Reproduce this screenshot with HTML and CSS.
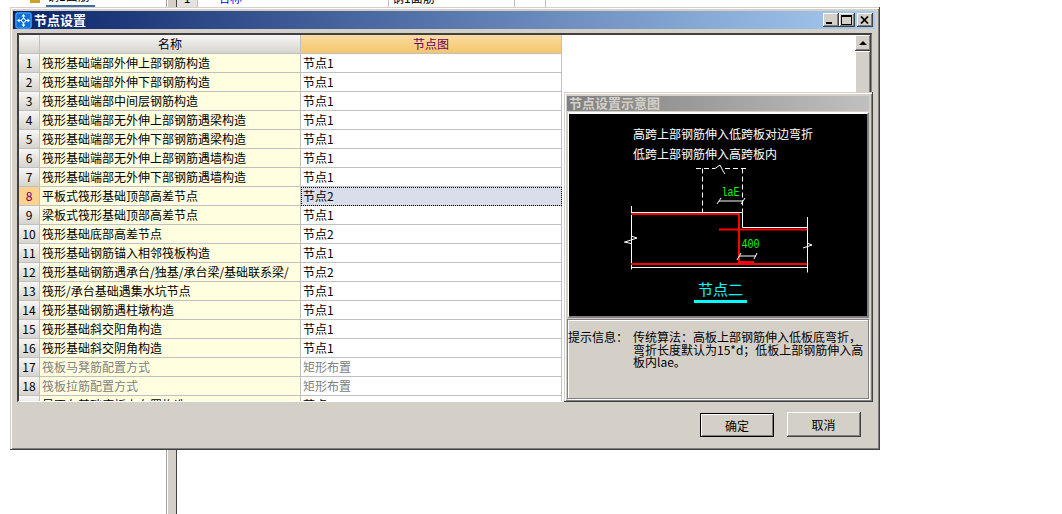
FILE: index.html
```html
<!DOCTYPE html>
<html lang="zh-CN">
<head>
    <meta charset="UTF-8">
    <title>节点设置</title>
    <link rel="stylesheet" href="styles.css">
</head>
<body>
    <!-- application behind the dialog -->
    <div class="back-tree">
        <span class="back-icon"></span>
        <span class="back-tree-label">钢1面筋</span>
    </div>
    <div class="back-splitter"></div>
    <div class="back-table">
        <div class="back-num">1</div>
        <div class="back-name">名称</div>
        <div class="back-value">钢1面筋</div>
        <div class="back-cell"></div>
    </div>

    <div class="window">
        <div class="titlebar">
            <svg class="title-icon" width="17" height="17" viewBox="0 0 17 17">
                <rect x="0" y="0" width="17" height="17" rx="3" fill="#0f6fd8"/>
                <rect x="1" y="1" width="15" height="15" rx="2" fill="none" stroke="#4fa6f2"/>
                <path d="M8.5 3V14M3 8.5H14" fill="none" stroke="#fff" stroke-width="1.2"/>
                <path d="M8.5 2L6.5 4.5H10.5ZM8.5 15L6.5 12.5H10.5ZM2 8.5L4.5 6.5V10.5ZM15 8.5L12.5 6.5V10.5Z" fill="#fff"/>
                <circle cx="8.5" cy="8.5" r="2" fill="#0f6fd8" stroke="#fff"/>
            </svg>
            <div class="title-text">节点设置</div>
            <div class="title-btns">
                <div class="cap-btn"><span class="cap-min"></span></div>
                <div class="cap-btn"><span class="cap-max"></span></div>
                <div class="cap-btn cap-close">
                    <svg width="9" height="8" viewBox="0 0 9 8"><path d="M1 0.5L8 7.5M8 0.5L1 7.5" stroke="#000" stroke-width="1.7" fill="none"/></svg>
                </div>
            </div>
        </div>

        <div class="grid-panel">
            <div class="grid">
                <div class="row row-head">
                    <div class="num"></div>
                    <div class="cell">名称</div>
                    <div class="cell cell-active">节点图</div>
                </div>
                <div class="row"><div class="num">1</div><div class="cell name">筏形基础端部外伸上部钢筋构造</div><div class="cell">节点1</div></div>
                <div class="row"><div class="num">2</div><div class="cell name">筏形基础端部外伸下部钢筋构造</div><div class="cell">节点1</div></div>
                <div class="row"><div class="num">3</div><div class="cell name">筏形基础端部中间层钢筋构造</div><div class="cell">节点1</div></div>
                <div class="row"><div class="num">4</div><div class="cell name">筏形基础端部无外伸上部钢筋遇梁构造</div><div class="cell">节点1</div></div>
                <div class="row"><div class="num">5</div><div class="cell name">筏形基础端部无外伸下部钢筋遇梁构造</div><div class="cell">节点1</div></div>
                <div class="row"><div class="num">6</div><div class="cell name">筏形基础端部无外伸上部钢筋遇墙构造</div><div class="cell">节点1</div></div>
                <div class="row"><div class="num">7</div><div class="cell name">筏形基础端部无外伸下部钢筋遇墙构造</div><div class="cell">节点1</div></div>
                <div class="row row-selected"><div class="num">8</div><div class="cell name">平板式筏形基础顶部高差节点</div><div class="cell cell-current">节点2</div></div>
                <div class="row"><div class="num">9</div><div class="cell name">梁板式筏形基础顶部高差节点</div><div class="cell">节点1</div></div>
                <div class="row"><div class="num">10</div><div class="cell name">筏形基础底部高差节点</div><div class="cell">节点2</div></div>
                <div class="row"><div class="num">11</div><div class="cell name">筏形基础钢筋锚入相邻筏板构造</div><div class="cell">节点1</div></div>
                <div class="row"><div class="num">12</div><div class="cell name">筏形基础钢筋遇承台/独基/承台梁/基础联系梁/</div><div class="cell">节点2</div></div>
                <div class="row"><div class="num">13</div><div class="cell name">筏形/承台基础遇集水坑节点</div><div class="cell">节点1</div></div>
                <div class="row"><div class="num">14</div><div class="cell name">筏形基础钢筋遇柱墩构造</div><div class="cell">节点1</div></div>
                <div class="row"><div class="num">15</div><div class="cell name">筏形基础斜交阳角构造</div><div class="cell">节点1</div></div>
                <div class="row"><div class="num">16</div><div class="cell name">筏形基础斜交阴角构造</div><div class="cell">节点1</div></div>
                <div class="row row-off"><div class="num">17</div><div class="cell name">筏板马凳筋配置方式</div><div class="cell">矩形布置</div></div>
                <div class="row row-off"><div class="num">18</div><div class="cell name">筏板拉筋配置方式</div><div class="cell">矩形布置</div></div>
                <div class="row"><div class="num">19</div><div class="cell name">是否在基础底板上布置构造</div><div class="cell">节点1</div></div>
            </div>
            <div class="scrollbar">
                <div class="scroll-up"><span class="arrow-up"></span></div>
                <div class="scroll-thumb"></div>
            </div>
        </div>

        <div class="footer">
            <button type="button" class="btn btn-default">确定</button>
            <button type="button" class="btn">取消</button>
        </div>

        <!-- floating preview panel -->
        <div class="preview">
            <div class="preview-title">节点设置示意图</div>
            <div class="preview-frame">
                <svg class="drawing" width="298" height="202" viewBox="4 4 298 202">
                    <text class="dw-text" x="68" y="28.5">高跨上部钢筋伸入低跨板对边弯折</text>
                    <text class="dw-text" x="68" y="48.5">低跨上部钢筋伸入高跨板内</text>

                    <path class="dw-dash" d="M131 58.5H150M160 58.5H182M137.5 58.5V102M177.5 58.5V102"/>
                    <path class="dw-line" d="M150 58.5L155 55L158 61L160 64"/>

                    <text class="dw-dim" x="156.5" y="86" textLength="18" lengthAdjust="spacingAndGlyphs">laE</text>
                    <path class="dw-line" d="M154 91H178M152 94L156 88M176 94L180 88"/>

                    <path class="dw-line" d="M66.5 102.5H177.5V117.5H242.5M66.5 96V159.5M242.5 107V162.5M66.5 157.5H242.5"/>
                    <path class="dw-line" d="M59 132L66 133.5M66 126L72 128L66 130L60 132M238 138L247 135L242 133"/>

                    <path class="dw-red" d="M66 104H174V154M154 119.5H242M66 154H242"/>
                    <rect x="174" y="151" width="15" height="3" fill="#ff0000"/>

                    <text class="dw-dim" x="176.5" y="138" textLength="18" lengthAdjust="spacingAndGlyphs">400</text>
                    <path class="dw-line" d="M174 146H191M172 150L176 143M189 149L192 143"/>

                    <text class="dw-name" x="133" y="185">节点二</text>
                    <rect x="129" y="190" width="53" height="3" fill="#00ffff"/>
                </svg>
            </div>
            <div class="preview-info">
                <div class="info-label">提示信息：</div>
                <div class="info-text">传统算法：高板上部钢筋伸入低板底弯折，<br>弯折长度默认为15*d；低板上部钢筋伸入高<br>板内lae。</div>
            </div>
        </div>
    </div>
</body>
</html>
```

FILE: styles.css
```css
* {
    margin: 0;
    padding: 0;
    box-sizing: border-box;
}

body {
    position: relative;
    width: 1062px;
    height: 514px;
    overflow: hidden;
    background: #fff;
    font-family: "Noto Sans CJK SC", "Liberation Sans", sans-serif;
    font-size: 12px;
    color: #000;
}

/* things behind the dialog */
.back-tree {
    position: absolute;
    left: 0;
    top: 0;
    width: 166px;
    height: 8px;
    overflow: hidden;
}

.back-icon {
    position: absolute;
    left: 30px;
    top: 0;
    width: 10px;
    height: 3px;
    background: #c9a227;
}

.back-tree-label {
    position: absolute;
    left: 46px;
    top: -12px;
    width: 49px;
    line-height: 16px;
    height: 19px;
    padding-left: 1px;
    white-space: nowrap;
    border-bottom: 2px solid #3a6ea5;
}

.back-splitter {
    position: absolute;
    left: 166px;
    top: 0;
    width: 11px;
    height: 514px;
    background: #d4d0c8;
    border-left: 1px solid #a5a29b;
    border-right: 1px solid #404040;
    box-shadow: inset 1px 0 0 #fff;
}

.back-table {
    position: absolute;
    left: 177px;
    top: 0;
    height: 8px;
    display: flex;
    overflow: hidden;
}

.back-table > div {
    line-height: 14px;
    margin-top: -9px;
    height: 17px;
    white-space: nowrap;
    border-right: 1px solid #c0c0c0;
}

.back-num {
    width: 21px;
    background: #e4e3df;
    text-align: center;
}

.back-name {
    width: 191px;
    padding-left: 20px;
    color: #0000ff;
}

.back-value {
    width: 126px;
    padding-left: 3px;
}

.back-cell {
    width: 31px;
}

/* dialog */
.window {
    position: absolute;
    left: 10px;
    top: 7px;
    width: 870px;
    height: 443px;
    padding: 4px 4px 0 3px;
    background: #d4d0c8;
    border-right: 1px solid #404040;
    border-bottom: 1px solid #404040;
    box-shadow: inset 1px 1px 0 #d4d0c8, inset 2px 2px 0 #fff, inset -1px -1px 0 #808080;
}

.titlebar {
    display: flex;
    align-items: center;
    height: 18px;
    padding-left: 2px;
    background: linear-gradient(90deg, #0a246a 0%, #a6caf0 100%);
}

.title-icon {
    flex: none;
}

.title-text {
    margin: -2px 0 0 2px;
    font-size: 13px;
    font-weight: 700;
    color: #fff;
}

.title-btns {
    display: flex;
    margin-left: auto;
    margin-right: 2px;
}

.cap-btn {
    position: relative;
    width: 16px;
    height: 14px;
    background: #d4d0c8;
    border-right: 1px solid #404040;
    border-bottom: 1px solid #404040;
    box-shadow: inset 1px 1px 0 #fff, inset -1px -1px 0 #808080;
    display: flex;
    align-items: center;
    justify-content: center;
}

.cap-close {
    margin-left: 2px;
}

.cap-min {
    width: 6px;
    height: 2px;
    margin-top: 7px;
    margin-right: 4px;
    background: #000;
}

.cap-max {
    width: 11px;
    height: 10px;
    border: 1px solid #000;
    border-top-width: 2px;
}

/* table */
.grid-panel {
    display: flex;
    width: 855px;
    height: 369px;
    margin: 4px 0 0 4px;
    background: #fff;
    border-top: 2px solid #404040;
    border-left: 2px solid #404040;
    border-right: 1px solid #808080;
    border-bottom: 1px solid #fff;
}

.grid {
    flex: 1;
    overflow: hidden;
}

.row {
    display: grid;
    grid-template-columns: 21px 261px 261px;
    width: 543px;
    height: 19px;
    line-height: 17px;
}

.num,
.cell {
    height: 19px;
    border-right: 1px solid #c0c0c0;
    border-bottom: 1px solid #c0c0c0;
    overflow: hidden;
    white-space: nowrap;
}

.num {
    text-align: center;
    background: linear-gradient(180deg, #f6f6f5 0%, #d6d4ce 100%);
}

.cell {
    padding-left: 2px;
    background: #fff;
}

.cell.name {
    background: #ffffe0;
}

.row-head .cell {
    padding-left: 0;
    text-align: center;
    background: linear-gradient(180deg, #f6f6f5 0%, #d6d4ce 100%);
}

.row-head .cell-active {
    color: #660066;
    background: linear-gradient(180deg, #fbdca2 0%, #f5c56b 100%);
}

.row-selected .num {
    color: #660066;
    background: #fdd28a;
}

.row-selected .cell-current {
    background: #d9deea;
    outline: 1px dotted #000;
    outline-offset: -1px;
}

.row-off .cell {
    color: #808080;
}

.scrollbar {
    flex: none;
    width: 16px;
    display: flex;
    flex-direction: column;
}

.scroll-up,
.scroll-thumb {
    background: #d4d0c8;
    border-right: 1px solid #404040;
    border-bottom: 1px solid #404040;
    box-shadow: inset 1px 1px 0 #fff, inset -1px -1px 0 #808080;
}

.scroll-up {
    height: 16px;
    display: flex;
    align-items: center;
    justify-content: center;
}

.arrow-up {
    width: 0;
    height: 0;
    border-left: 4px solid transparent;
    border-right: 4px solid transparent;
    border-bottom: 4px solid #000;
}

.scroll-thumb {
    flex: 1;
}

/* buttons */
.footer {
    display: flex;
    justify-content: flex-end;
    align-items: flex-start;
    gap: 13px;
    margin-top: 10px;
    padding-right: 14px;
}

.btn {
    width: 74px;
    height: 25px;
    font-family: inherit;
    font-size: 12px;
    color: #000;
    background: #d4d0c8;
    border: none;
    border-right: 1px solid #404040;
    border-bottom: 1px solid #404040;
    box-shadow: inset 1px 1px 0 #fff, inset -1px -1px 0 #808080;
}

.btn-default {
    height: 24px;
    margin-top: 1px;
    border: 1px solid #000;
    box-shadow: inset 1px 1px 0 #fff, inset -1px -1px 0 #808080;
}

/* preview panel */
.preview {
    position: absolute;
    left: 554px;
    top: 85px;
    width: 309px;
    height: 310px;
    padding: 4px 3px 0 3px;
    background: #d4d0c8;
    border-right: 1px solid #404040;
    border-bottom: 1px solid #404040;
    box-shadow: inset 1px 1px 0 #d4d0c8, inset 2px 2px 0 #fff, inset -1px -1px 0 #808080;
}

.preview-title {
    height: 15px;
    padding-left: 2px;
    font-size: 13px;
    line-height: 14px;
    font-weight: 700;
    color: #d4d0c8;
    background: linear-gradient(90deg, #808080 0%, #c0c0c0 100%);
}

.preview-frame {
    width: 301px;
    height: 206px;
    margin: 1px 0 0 1px;
    background: #000;
    border-top: 2px solid #fff;
    border-left: 1px solid #fff;
    border-right: 2px solid #808080;
    border-bottom: 2px solid #808080;
}

.drawing {
    display: block;
}

.dw-text {
    font-size: 12px;
    fill: #fff;
}

.dw-dim {
    font-family: "Liberation Mono", monospace;
    font-size: 12px;
    fill: #00ff00;
}

.dw-name {
    font-size: 15px;
    fill: #00ffff;
}

.dw-line {
    fill: none;
    stroke: #fff;
    stroke-width: 1;
}

.dw-dash {
    fill: none;
    stroke: #fff;
    stroke-width: 1;
    stroke-dasharray: 5 3;
}

.dw-red {
    fill: none;
    stroke: #ff0000;
    stroke-width: 2;
}

.preview-info {
    display: flex;
    width: 302px;
    height: 80px;
    margin-top: 1px;
    padding: 11px 0 0 0;
    line-height: 12.5px;
    border: 1px solid #808080;
    box-shadow: 1px 1px 0 #fff, inset 1px 1px 0 #fff;
}

.info-label {
    flex: none;
    width: 65px;
}

.info-text {
    white-space: nowrap;
}
```
